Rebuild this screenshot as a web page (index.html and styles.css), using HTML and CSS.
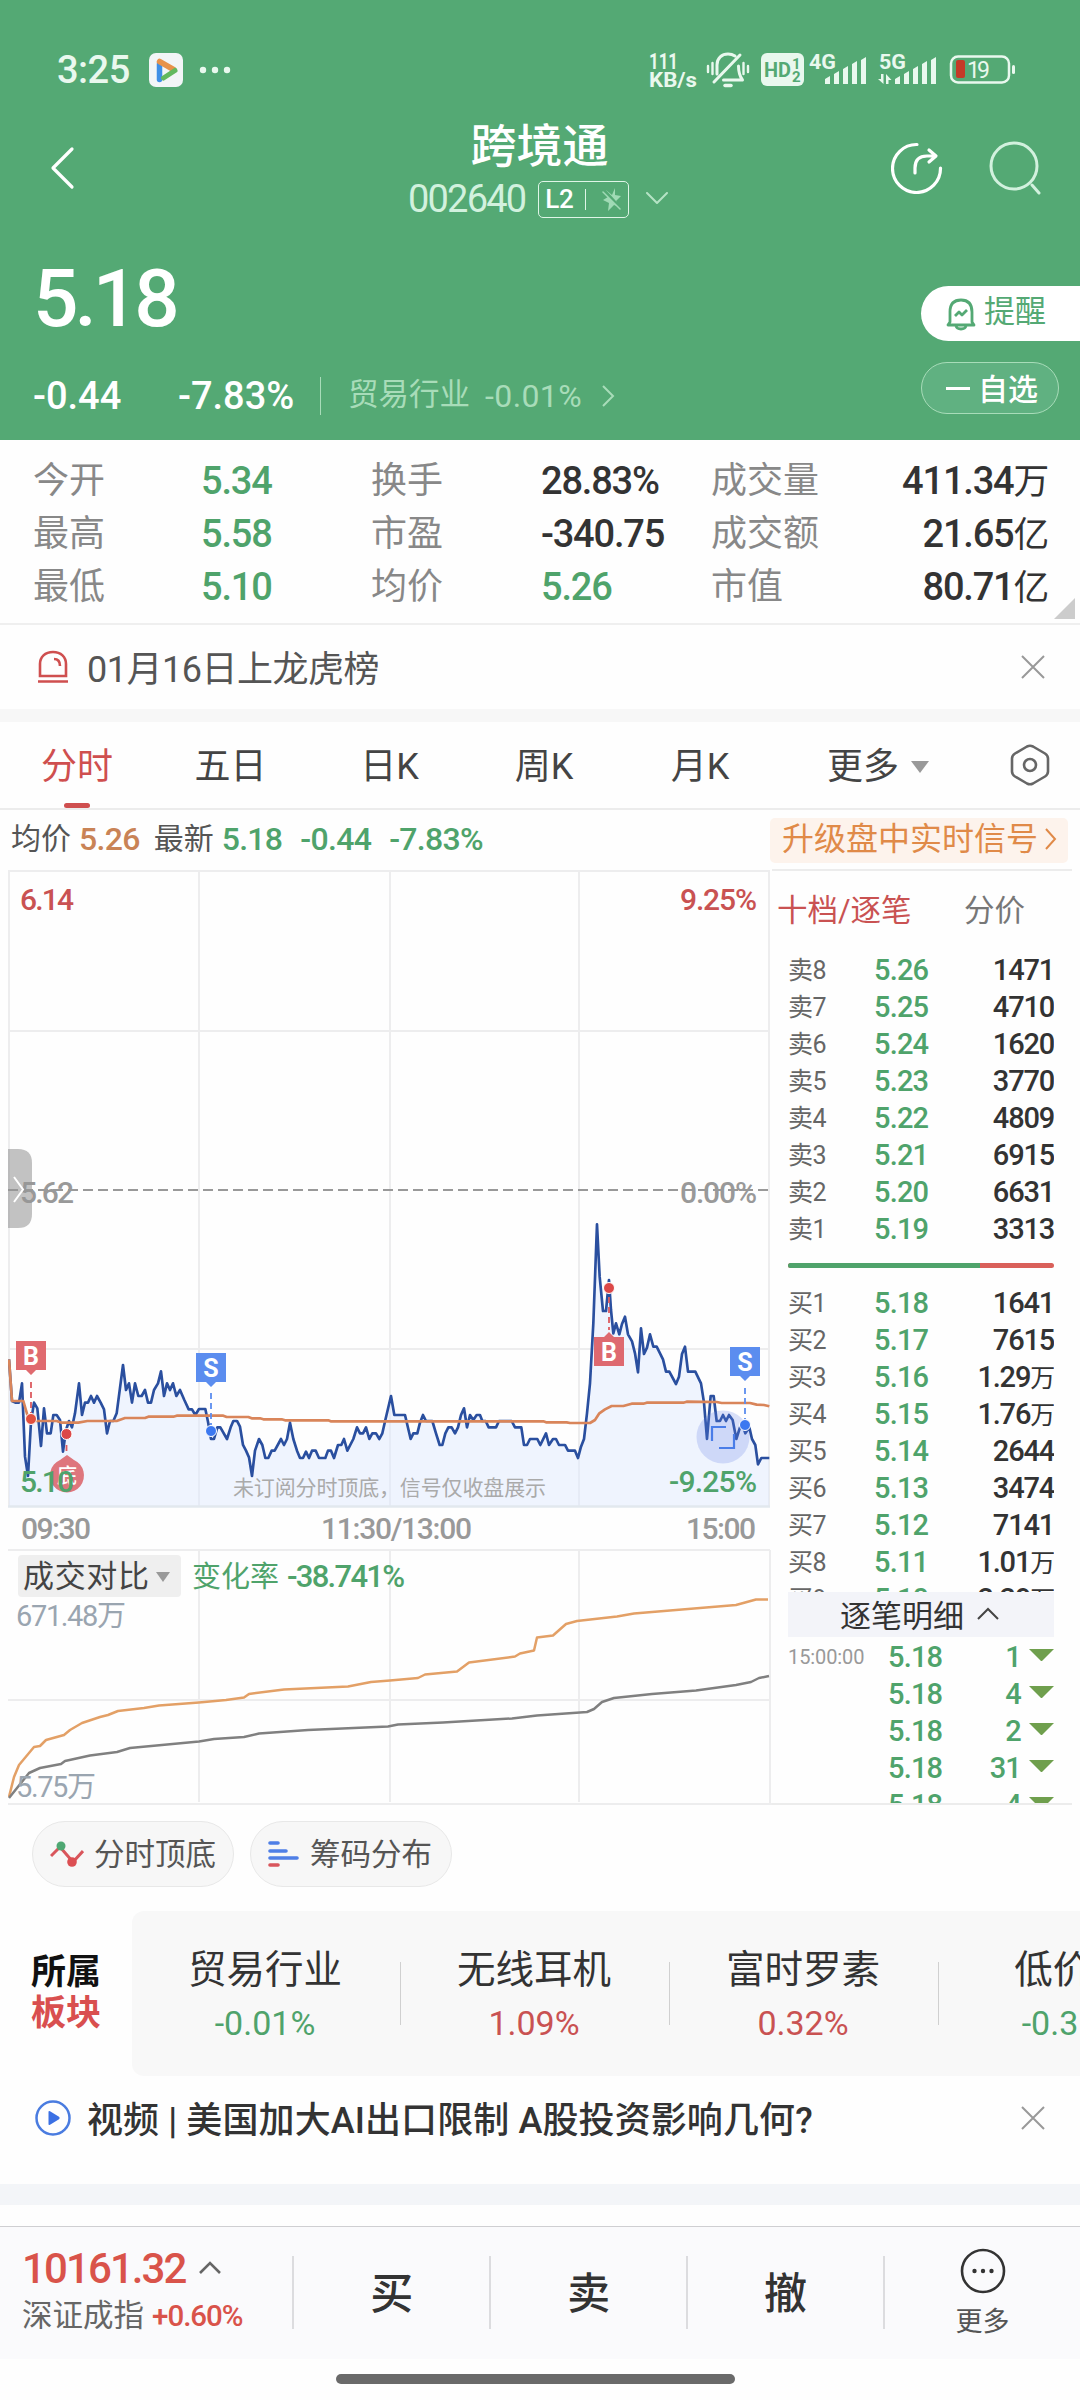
FILE: index.html
```html
<!DOCTYPE html>
<html lang="zh-CN">
	<head>
		<meta charset="utf-8">
		<title>跨境通 002640</title>
		<link rel="stylesheet" href="styles.css">
	</head>
	<body>

		<header class="header">
			<div class="status-bar">
				<span class="status-time">3:25</span>
				<svg class="app-icon" width="34" height="34" viewBox="0 0 34 34">
					<rect width="34" height="34" rx="7" fill="#f2f5f7"/>
					<path d="M10.500 11v15.500" stroke="#3f8fe6" stroke-width="5.500" stroke-linecap="round"/>
					<path d="M10.500 8.500l14 8" stroke="#e8924a" stroke-width="5.500" stroke-linecap="round"/>
					<path d="M14.500 25l11.500-7.500" stroke="#62b95f" stroke-width="5" stroke-linecap="round"/>
				</svg>
				<svg class="status-dots" width="32" height="8" viewBox="0 0 32 8">
					<circle cx="4" cy="4" r="3.200"/><circle cx="16" cy="4" r="3.200"/><circle cx="28" cy="4" r="3.200"/>
				</svg>
				<svg class="status-icons" width="376" height="40" viewBox="645 50 376 40">
					<text x="649" y="69" font-size="22" textLength="29" lengthAdjust="spacingAndGlyphs">111</text>
					<text x="649" y="87" font-size="21" textLength="48" lengthAdjust="spacingAndGlyphs">KB/s</text>
					<g fill="none" stroke="#e9f8ee" stroke-linecap="round" stroke-linejoin="round">
						<path d="M717 74v-9c0-7 5-11 11-11 3 0 5 .7 7 2M738.500 66c0 6 1 10 4 14h-19M714 82l26-27" stroke-width="3"/>
						<path d="M725 85.500h6" stroke-width="3.500"/>
						<path d="M708 66v6M712.500 63v11M743.500 63v11M748 66v6" stroke-width="2.400"/>
					</g>
					<rect x="761" y="53" width="43" height="33" rx="6"/>
					<text class="status-cut" x="764" y="77" font-size="21" textLength="27" lengthAdjust="spacingAndGlyphs">HD</text>
					<text class="status-cut" x="792" y="69" font-size="15">1</text>
					<text class="status-cut" x="792" y="82" font-size="15">2</text>
					<text x="809" y="69" font-size="21" textLength="27" lengthAdjust="spacingAndGlyphs">4G</text>
					<path d="M825 79l5-3v8h-5zM834 74l5-3v13h-5zM843 69l5-3v18h-5zM852 64l5-3v23h-5zM861 60l5-3v27h-5z"/>
					<text x="879" y="69" font-size="21" textLength="27" lengthAdjust="spacingAndGlyphs">5G</text>
					<path d="M881 74h2.500v10l-5.500-5h3zM886 84h2.500v-4h3l-5.500-6z"/>
					<path d="M895 79l5-3v8h-5zM904 74l5-3v13h-5zM913 69l5-3v18h-5zM922 64l5-3v23h-5zM931 60l5-3v27h-5z"/>
					<rect x="951" y="56.500" width="58" height="26" rx="7" fill="none" stroke="#e9f8ee" stroke-width="2.500"/>
					<rect x="956" y="60" width="9" height="18" rx="2" style="fill: #c43a27"/>
					<rect x="1012" y="65" width="3" height="9" rx="1.500"/>
					<text x="967" y="78" font-size="23" font-weight="400" textLength="23">19</text>
				</svg>
			</div>

			<div class="nav">
				<svg class="nav-back" width="26" height="44" viewBox="0 0 26 44"><path d="M23 3L4 22l19 19"/></svg>
				<div class="nav-title">
					<h1>跨境通</h1>
					<div class="nav-code">
						<span>002640</span>
						<span class="level">
							<b>L2</b>
							<i></i>
							<svg width="20" height="24" viewBox="0 0 20 24">
								<path d="M4 3l6 5 3-7v7l6 1-5 5 3 6-5-2-6 6 1-8-6-3 5-3z" fill="#a0dab5"/>
								<path class="flash-cut" d="M2 3l17 19"/>
								<path class="flash-slash" d="M1 5l17 17"/>
							</svg>
						</span>
						<svg width="22" height="14" viewBox="0 0 22 14"><path d="M1 1l10 10L21 1"/></svg>
					</div>
				</div>
				<svg class="nav-share" width="52" height="52" viewBox="0 0 52 52">
					<path d="M26 2.500A24 24 0 1 0 49.500 26"/>
					<path d="M24 31v-5c0-8 4-12 12-12h8M38 8l7 6-7 6"/>
				</svg>
				<svg class="nav-search" width="54" height="54" viewBox="0 0 54 54">
					<circle cx="26" cy="25" r="23"/>
					<path d="M44 44l7 8"/>
				</svg>
			</div>

			<div class="summary">
				<div class="summary-left">
					<div class="last-price">5.18</div>
					<div class="change">
						<span class="change-value">-0.44</span>
						<span class="change-percent">-7.83%</span>
						<span class="industry">贸易行业</span>
						<span class="industry-percent">-0.01%</span>
						<svg width="14" height="22" viewBox="0 0 14 22"><path d="M2 1l10 10L2 21" fill="none" stroke="#a8dcb9" stroke-width="2"/></svg>
					</div>
				</div>
				<div class="summary-right">
					<div class="btn-remind">
						<svg width="32" height="34" viewBox="0 0 32 34" fill="none" stroke="#54a974" stroke-width="2.800" stroke-linejoin="round">
							<path d="M5 25V15C5 7 9 3 16 3s11 4 11 12v10l2 3H3z"/>
							<path d="M11 29c1 4 9 4 10 0"/>
							<path d="M10 19l4-4 3 3 5-5"/>
						</svg>
						<span>提醒</span>
					</div>
					<div class="btn-favorite"><i></i><span>自选</span></div>
				</div>
			</div>
		</header>

		<section class="quotes">
			<span class="name">今开</span><span class="down">5.34</span>
			<span class="name">换手</span><span>28.83%</span>
			<span class="name">成交量</span><span class="right">411.34<small>万</small></span>
			<span class="name">最高</span><span class="down">5.58</span>
			<span class="name">市盈</span><span>-340.75</span>
			<span class="name">成交额</span><span class="right">21.65<small>亿</small></span>
			<span class="name">最低</span><span class="down">5.10</span>
			<span class="name">均价</span><span class="down">5.26</span>
			<span class="name">市值</span><span class="right">80.71<small>亿</small></span>
			<i class="corner"></i>
		</section>

		<section class="notice">
			<svg width="32" height="34" viewBox="0 0 32 34" fill="none" stroke="#cf4f4f" stroke-width="2.600">
				<path d="M3 26V14C3 7 8 2 16 2s13 5 13 12v12zM1 31.500h30"/>
				<path d="M17 9c4 0 6 3 6 7"/>
			</svg>
			<span>01月16日上龙虎榜</span>
			<svg class="close" width="24" height="24" viewBox="0 0 24 24"><path d="M1 1l22 22M23 1L1 23"/></svg>
		</section>

		<nav class="tabs">
			<span class="active">分时</span>
			<span>五日</span>
			<span>日K</span>
			<span>周K</span>
			<span>月K</span>
			<span>更多<i class="caret"></i></span>
			<svg width="40" height="42" viewBox="0 0 40 42" fill="none" stroke="#666" stroke-width="2.600" stroke-linejoin="round">
				<path d="M17 2.500q3-1.500 6 0l12 7q3 2 3 5v13q0 3-3 5l-12 7q-3 1.500-6 0l-12-7q-3-2-3-5v-13q0-3 3-5z"/>
				<circle cx="20" cy="21" r="6"/>
			</svg>
		</nav>

		<div class="chart-info">
			<span class="key">均价</span><span class="avg">5.26</span>
			<span class="key">最新</span><span class="down">5.18</span>
			<span class="down gap">-0.44</span>
			<span class="down gap">-7.83%</span>
			<div class="upgrade">
				升级盘中实时信号
				<svg width="12" height="22" viewBox="0 0 12 22"><path d="M1 1l9 10-9 10" fill="none" stroke="#e08a48" stroke-width="2"/></svg>
			</div>
		</div>

		<main class="market">
			<svg class="chart" width="764" height="936" viewBox="8 869 764 936">
				<!-- grid -->
				<g stroke="#ededee" stroke-width="2" fill="none">
					<path d="M8 871H770M8 1031H770M8 1349H770M9 870V1507M199 870V1507M390 870V1507M579 870V1507M769 870V1507"/>
					<path d="M8 1550H770M8 1700H770M199 1550V1802M390 1550V1802M579 1550V1802M770 1550V1804"/>
					<path d="M8 1804H772"/>
				</g>
				<path d="M8 1190H768" stroke="#999" stroke-width="2" stroke-dasharray="10 5"/>

				<!-- price -->
				<g transform="translate(0 1200) scale(.33333)" fill="none" stroke-linejoin="round">
					<path fill="#dfe9fd" fill-opacity=".5" d="M27 918V478L36 603 46 608 57 608 66 550 75 770 84 828 93 665 102 608 112 625 123 738 132 625 141 700 152 700 160 645 170 645 180 660 189 755 198 690 207 663 216 682 225 640 237 550 246 645 255 608 264 608 273 588 282 608 291 588 302 608 312 628 321 700 330 663 340 663 350 640 369 495 378 570 387 550 396 608 405 550 415 588 425 588 435 570 444 608 453 608 462 570 474 550 483 514 492 588 501 550 510 570 519 550 529 588 540 570 553 600 566 628 576 628 586 645 597 627 616 627 624 665 633 717 642 717 652 682 661 682 681 717 692 682 700 663 711 663 720 680 729 735 738 752 747 772 756 828 765 752 777 717 787 735 796 774 805 774 815 752 824 752 843 717 852 735 861 717 870 668 880 717 891 752 900 774 909 774 918 755 927 774 936 752 947 752 957 774 976 774 984 752 993 752 1002 774 1014 735 1024 735 1032 717 1042 752 1060 717 1071 682 1080 700 1089 700 1098 682 1108 717 1117 700 1128 700 1138 717 1147 700 1156 660 1173 588 1183 645 1215 645 1232 717 1240 700 1252 700 1260 668 1269 645 1278 663 1297 663 1308 700 1319 735 1327 735 1336 700 1345 682 1355 682 1365 700 1374 682 1383 645 1392 625 1401 682 1410 645 1420 660 1430 645 1440 645 1447 663 1457 663 1466 682 1488 682 1497 663 1535 663 1545 682 1564 682 1572 735 1581 735 1590 717 1612 717 1621 735 1638 700 1647 735 1659 717 1668 717 1677 735 1695 735 1704 752 1725 752 1734 774 1743 740 1752 717 1761 640 1770 550 1780 370 1791 73 1799 230 1809 333 1818 333 1827 240 1833 330 1840 400 1848 370 1858 403 1866 372 1875 350 1884 403 1896 424 1905 460 1914 517 1923 385 1932 462 1941 443 1950 403 1960 440 1970 440 1989 478 1998 515 2008 515 2028 552 2037 530 2046 462 2055 440 2064 515 2086 515 2103 550 2112 608 2121 717 2132 588 2141 588 2150 663 2160 663 2169 645 2178 663 2187 645 2198 660 2209 717 2220 682 2230 682 2236 700 2248 682 2256 717 2266 735 2274 793 2284 774 2308 774V918z"/>
					<path stroke="#2a4f9f" stroke-width="8" d="M27 478L36 603 46 608 57 608 66 550 75 770 84 828 93 665 102 608 112 625 123 738 132 625 141 700 152 700 160 645 170 645 180 660 189 755 198 690 207 663 216 682 225 640 237 550 246 645 255 608 264 608 273 588 282 608 291 588 302 608 312 628 321 700 330 663 340 663 350 640 369 495 378 570 387 550 396 608 405 550 415 588 425 588 435 570 444 608 453 608 462 570 474 550 483 514 492 588 501 550 510 570 519 550 529 588 540 570 553 600 566 628 576 628 586 645 597 627 616 627 624 665 633 717 642 717 652 682 661 682 681 717 692 682 700 663 711 663 720 680 729 735 738 752 747 772 756 828 765 752 777 717 787 735 796 774 805 774 815 752 824 752 843 717 852 735 861 717 870 668 880 717 891 752 900 774 909 774 918 755 927 774 936 752 947 752 957 774 976 774 984 752 993 752 1002 774 1014 735 1024 735 1032 717 1042 752 1060 717 1071 682 1080 700 1089 700 1098 682 1108 717 1117 700 1128 700 1138 717 1147 700 1156 660 1173 588 1183 645 1215 645 1232 717 1240 700 1252 700 1260 668 1269 645 1278 663 1297 663 1308 700 1319 735 1327 735 1336 700 1345 682 1355 682 1365 700 1374 682 1383 645 1392 625 1401 682 1410 645 1420 660 1430 645 1440 645 1447 663 1457 663 1466 682 1488 682 1497 663 1535 663 1545 682 1564 682 1572 735 1581 735 1590 717 1612 717 1621 735 1638 700 1647 735 1659 717 1668 717 1677 735 1695 735 1704 752 1725 752 1734 774 1743 740 1752 717 1761 640 1770 550 1780 370 1791 73 1799 230 1809 333 1818 333 1827 240 1833 330 1840 400 1848 370 1858 403 1866 372 1875 350 1884 403 1896 424 1905 460 1914 517 1923 385 1932 462 1941 443 1950 403 1960 440 1970 440 1989 478 1998 515 2008 515 2028 552 2037 530 2046 462 2055 440 2064 515 2086 515 2103 550 2112 608 2121 717 2132 588 2141 588 2150 663 2160 663 2169 645 2178 663 2187 645 2198 660 2209 717 2220 682 2230 682 2236 700 2248 682 2256 717 2266 735 2274 793 2284 774 2308 774"/>
					<path stroke="#d9855a" stroke-width="8" d="M27 478L36 603H70L85 655 105 663H170L185 668H235L262 663H350L375 654H435L445 650H520L530 647H670L680 651H745L755 655H780L790 658H845L855 661H985L992 664H1630L1638 667H1700L1710 669H1770L1785 660 1798 640 1815 628 1835 618H1870L1895 611H1930L1940 608H2050L2060 605 2150 606 2165 609H2250L2270 614 2292 615 2308 619"/>
				</g>
				<path d="M8 1506.500H770" stroke="#e2e8ee" stroke-width="2.500"/>

				<!-- signals -->
				<g stroke-width="1.800" stroke-dasharray="6 4">
					<path d="M31 1382V1414M66.500 1445V1455M609 1297V1330" stroke="#dc5a5f"/>
					<path d="M211 1393V1425M745 1388V1420" stroke="#5b8def"/>
				</g>
				<circle cx="723" cy="1437" r="26.500" fill="#6482e6" fill-opacity=".24"/>
				<path d="M712 1441v-14h14M719 1448h15v-14" fill="none" stroke="#4a7de8" stroke-width="2.200"/>
				<g stroke="#fff" stroke-width="1">
					<circle cx="31" cy="1419" r="5.500" fill="#e2503f"/>
					<circle cx="66.500" cy="1434" r="5.500" fill="#dc4848"/>
					<circle cx="609" cy="1288" r="5.500" fill="#dc4848"/>
					<circle cx="211" cy="1431" r="5.500" fill="#3b78f0"/>
					<circle cx="745" cy="1425" r="5.500" fill="#3b78f0"/>
				</g>
				<path d="M16 1341h30v29h-10l-5 5-5-5H16z" fill="#e06a6f"/>
				<path d="M594 1366h30v-29h-10l-5-5-5 5h-10z" fill="#dc5a60" fill-opacity=".9"/>
				<path d="M196 1353h30v29h-10l-5 5-5-5h-10zM730 1347h30v29h-10l-5 5-5-5h-10z" fill="#5b8def"/>
				<path d="M67 1455l7 5a17 17 0 1 1-14 0z" fill="#d9565c" fill-opacity=".8"/>
				<g class="mark-text">
					<text x="31" y="1365">B</text>
					<text x="609" y="1361">B</text>
					<text x="211" y="1377">S</text>
					<text x="745" y="1371">S</text>
					<text class="mark-bottom" x="67" y="1483">底</text>
				</g>

				<!-- turnover comparison -->
				<g fill="none" stroke-width="2.500" stroke-linejoin="round">
					<path stroke="#e3a066" d="M9 1797L14 1777 19 1765 34 1747 40 1746 46 1740 64 1735 70 1730 82 1723 100 1717 108 1715 118 1711 144 1708 159 1705.500 199 1702.500 226 1700 244 1697.500 249 1694 284 1689.500 348 1686.500 371 1682 390 1680.500 418 1678 425 1674.500 457 1671.500 469 1662.500 515 1656.500 520 1653.500 534 1650.500 537 1637.500 553 1635.500 566 1624 577 1621 617 1616.500 634 1613.500 736 1605 756 1599.500H768"/>
					<path stroke="#808080" d="M9 1798L29 1773 40 1768 61 1764 65 1761 90 1755.500 117 1752 130 1748 199 1741.500 214 1739 244 1737 259 1733.500 308 1730 388 1726.500 398 1724.500 443 1722.500 512 1718.500 537 1715.500 587 1712 594 1709 602 1702 614 1698 652 1694 696 1690.500 736 1685 751 1682 759 1678 769 1676"/>
				</g>

				<!-- labels -->
				<g font-size="30" font-weight="500">
					<text class="axis up" x="20" y="910" textLength="54">6.14</text>
					<text class="axis up" x="680" y="910" textLength="77">9.25%</text>
					<text class="axis" x="20" y="1203" textLength="54">5.62</text>
					<text class="axis" x="680" y="1203" textLength="77">0.00%</text>
					<text class="axis down" x="20" y="1492" textLength="54">5.10</text>
					<text class="axis down" x="669" y="1492" textLength="88">-9.25%</text>
					<text class="axis" x="21" y="1539" textLength="70">09:30</text>
					<text class="axis" x="321" y="1539" textLength="151">11:30/13:00</text>
					<text class="axis" x="686" y="1539" textLength="70">15:00</text>
				</g>
				<text class="hint" x="233" y="1495" textLength="313">未订阅分时顶底，信号仅收盘展示</text>
				<rect x="18" y="1555" width="163" height="42" rx="4" fill="#efefef"/>
				<text x="23" y="1587" font-size="31" fill="#444" textLength="126">成交对比</text>
				<path d="M156 1572h14l-7 10z" fill="#999"/>
				<text class="down" x="192" y="1587" font-size="29">变化率</text>
				<text class="down" x="287" y="1587" font-size="31" font-weight="500" textLength="118">-38.741%</text>
				<text x="16" y="1626" font-size="29" fill="#9aa5b0" textLength="110">671.48万</text>
				<text x="16" y="1797" font-size="29" fill="#9aa5b0" textLength="80">5.75万</text>

				<!-- side handle -->
				<path d="M8 1149h10q14 0 14 14v51q0 14-14 14H8z" fill="#969696" fill-opacity=".58"/>
				<path d="M14 1177l9 12.500-9 12.500" fill="none" stroke="#fff" stroke-width="2"/>
			</svg>

			<aside class="book">
				<div class="book-tabs"><span class="up">十档/逐笔</span><span>分价</span></div>
				<div class="levels">
					<div class="level-row"><span>卖8</span><b>5.26</b><em>1471</em></div>
					<div class="level-row"><span>卖7</span><b>5.25</b><em>4710</em></div>
					<div class="level-row"><span>卖6</span><b>5.24</b><em>1620</em></div>
					<div class="level-row"><span>卖5</span><b>5.23</b><em>3770</em></div>
					<div class="level-row"><span>卖4</span><b>5.22</b><em>4809</em></div>
					<div class="level-row"><span>卖3</span><b>5.21</b><em>6915</em></div>
					<div class="level-row"><span>卖2</span><b>5.20</b><em>6631</em></div>
					<div class="level-row"><span>卖1</span><b>5.19</b><em>3313</em></div>
					<div class="ratio"><i style="width: 72%"></i></div>
					<div class="level-row"><span>买1</span><b>5.18</b><em>1641</em></div>
					<div class="level-row"><span>买2</span><b>5.17</b><em>7615</em></div>
					<div class="level-row"><span>买3</span><b>5.16</b><em>1.29<small>万</small></em></div>
					<div class="level-row"><span>买4</span><b>5.15</b><em>1.76<small>万</small></em></div>
					<div class="level-row"><span>买5</span><b>5.14</b><em>2644</em></div>
					<div class="level-row"><span>买6</span><b>5.13</b><em>3474</em></div>
					<div class="level-row"><span>买7</span><b>5.12</b><em>7141</em></div>
					<div class="level-row"><span>买8</span><b>5.11</b><em>1.01<small>万</small></em></div>
					<div class="level-row"><span>买9</span><b>5.10</b><em>2.29<small>万</small></em></div>
				</div>
				<div class="detail-title">
					逐笔明细
					<svg width="22" height="13" viewBox="0 0 22 13"><path d="M1 12L11 2l10 10" fill="none" stroke="#444" stroke-width="2"/></svg>
				</div>
				<div class="ticks">
					<div class="tick"><span>15:00:00</span><b>5.18</b><em>1</em><i></i></div>
					<div class="tick"><span></span><b>5.18</b><em>4</em><i></i></div>
					<div class="tick"><span></span><b>5.18</b><em>2</em><i></i></div>
					<div class="tick"><span></span><b>5.18</b><em>31</em><i></i></div>
					<div class="tick"><span></span><b>5.18</b><em>4</em><i></i></div>
				</div>
			</aside>
		</main>

		<div class="pills">
			<div class="pill">
				<svg width="34" height="28" viewBox="0 0 34 28">
					<path d="M1 16l9-9 13 15 10-11" fill="none" stroke="#d9565c" stroke-width="3"/>
					<circle cx="11" cy="6" r="4.500" fill="#4fa873"/>
					<circle cx="22" cy="22" r="4.800" fill="#dc4f53"/>
				</svg>
				<span>分时顶底</span>
			</div>
			<div class="pill">
				<svg width="32" height="28" viewBox="0 0 32 28" stroke-width="3.600" stroke-linecap="round">
					<path d="M2 3h8M2 11h16M2 18h27" stroke="#4f7fe6"/>
					<path d="M2 25h8" stroke="#d9565c"/>
				</svg>
				<span>筹码分布</span>
			</div>
		</div>

		<section class="sectors">
			<div class="sectors-title">所属<br><span>板块</span></div>
			<div class="sectors-list">
				<div class="sector">贸易行业<span class="down">-0.01%</span></div>
				<div class="sector">无线耳机<span class="up">1.09%</span></div>
				<div class="sector">富时罗素<span class="up">0.32%</span></div>
				<div class="sector">低价股<span class="down">-0.35%</span></div>
			</div>
		</section>

		<section class="video">
			<svg width="36" height="36" viewBox="0 0 36 36">
				<circle cx="18" cy="18" r="16.500" fill="none" stroke="#4a7ce0" stroke-width="2.500"/>
				<path d="M13.500 12q0-1.500 1.500-.7l9 5.500q1.500 1.200 0 2.400l-9 5.500q-1.500.8-1.500-.7z" fill="#3b70e4"/>
			</svg>
			<span>视频 | 美国加大AI出口限制 A股投资影响几何?</span>
			<svg class="close" width="24" height="24" viewBox="0 0 24 24"><path d="M1 1l22 22M23 1L1 23"/></svg>
		</section>
		<div class="band"></div>

		<footer class="bottom-bar">
			<div class="index">
				<div class="index-value">10161.32<svg width="24" height="14" viewBox="0 0 24 14"><path d="M2 12L12 2l10 10" fill="none" stroke="#666" stroke-width="2.600"/></svg></div>
				<div class="index-name">深证成指<span>+0.60%</span></div>
			</div>
			<div class="action">买</div>
			<div class="action">卖</div>
			<div class="action">撤</div>
			<div class="more">
				<svg width="46" height="46" viewBox="0 0 46 46">
					<circle cx="23" cy="23" r="21" fill="none" stroke="#333" stroke-width="2.600"/>
					<g fill="#333"><circle cx="14.500" cy="23" r="2.200"/><circle cx="23" cy="23" r="2.200"/><circle cx="31.500" cy="23" r="2.200"/></g>
				</svg>
				<span>更多</span>
			</div>
		</footer>
		<div class="home-indicator"></div>

	</body>
</html>
```

FILE: styles.css
```css
* {
	box-sizing: border-box;
}

body {
	margin: 0;
	width: 1080px;
	height: 2400px;
	overflow: hidden;
	background: #fefefe;
	color: #333;
	font-family: Roboto, "Noto Sans CJK SC", sans-serif;
}

svg {
	display: block;
	flex: none;
}

b, em, i {
	font-style: normal;
	font-weight: 400;
}

small {
	font-size: .94em;
	font-weight: 400;
}

.up {
	color: #c95252;
	fill: #c95252;
}

.down {
	color: #4fa36b;
	fill: #4fa36b;
}

/* header */

.header {
	height: 440px;
	background: #54a974;
	color: #fff;
}

.status-bar {
	display: flex;
	align-items: center;
	height: 90px;
	padding: 50px 59px 0 57px;
}

.status-time {
	width: 92px;
	font-size: 38px;
	font-weight: 500;
	line-height: 40px;
	letter-spacing: -0.5px;
	color: #e9f8ee;
}

.status-dots {
	margin-left: 16px;
	fill: #e9f8ee;
}

.status-icons {
	margin-left: auto;
	fill: #e9f8ee;
	font-weight: 700;
}

.status-icons .status-cut {
	fill: #54a974;
}

.nav {
	display: flex;
	height: 146px;
	padding: 26px 38px 0 49px;
}

.nav svg {
	fill: none;
	stroke: #fff;
	stroke-width: 3.2;
	stroke-linecap: round;
	stroke-linejoin: round;
}

.nav-back {
	margin-top: 30px;
}

.nav-title {
	flex: 1;
	margin-left: 76px;
}

.nav-title h1 {
	margin: 0;
	padding: 2px 0 0 15px;
	font-size: 46px;
	font-weight: 500;
	line-height: 56px;
	text-align: center;
	width: 762px;
}

.nav-code {
	display: flex;
	align-items: center;
	height: 38px;
	margin-top: 6px;
	padding-left: 257px;
	font-size: 38px;
	letter-spacing: -1.8px;
	color: #d2f1de;
}

.level {
	display: flex;
	align-items: center;
	width: 91px;
	height: 37px;
	margin: 0 17px 0 13px;
	padding-left: 6px;
	border: 1px solid #dff5e7;
	border-radius: 5px;
	font-size: 26px;
	letter-spacing: -0.5px;
	color: #fff;
}

.level b {
	font-weight: 500;
}

.level i {
	width: 1px;
	height: 21px;
	margin: 0 16px 0 12px;
	background: #dff5e7;
}

.nav .level svg {
	stroke: none;
}

.flash-cut {
	stroke: #54a974;
	stroke-width: 3;
}

.flash-slash {
	stroke: #a0dab5;
	stroke-width: 1.5;
}

.nav .nav-code > svg {
	stroke: #b5e3c5;
	stroke-width: 2;
}

.nav-share {
	margin: 26px 0 0 -200px;
}

.nav-search {
	margin: 25px 0 0 45px;
}

.nav .nav-search {
	stroke: #d2f1de;
	stroke-width: 3;
}

.summary {
	display: flex;
	justify-content: space-between;
	height: 204px;
}

.summary-left {
	padding: 22px 0 0 33px;
}

.last-price {
	height: 80px;
	font-size: 80px;
	font-weight: 500;
	line-height: 82px;
	letter-spacing: -4px;
}

.change {
	display: flex;
	align-items: center;
	height: 40px;
	margin-top: 38px;
	font-size: 38px;
	font-weight: 500;
}

.change-value {
	width: 145px;
}

.change-percent {
	width: 142px;
}

.industry {
	height: 38px;
	padding-left: 27px;
	border-left: 1px solid #a8dcb9;
	font-size: 30.5px;
	font-weight: 400;
	line-height: 36px;
	color: #a8dcb9;
}

.industry-percent {
	width: 116px;
	margin-left: 15px;
	font-size: 32px;
	font-weight: 400;
	letter-spacing: 0.4px;
	color: #a8dcb9;
}

.summary-right {
	width: 159px;
	padding-top: 50px;
}

.btn-remind {
	display: flex;
	align-items: center;
	gap: 7px;
	height: 55px;
	padding-left: 24px;
	border-radius: 28px 0 0 28px;
	background: #fff;
	font-size: 31px;
	line-height: 50px;
	color: #54a974;
}

.btn-remind span, .btn-favorite span {
	margin-bottom: 3px;
}

.btn-favorite {
	display: flex;
	align-items: center;
	gap: 8px;
	width: 138px;
	height: 52px;
	margin-top: 21px;
	padding-left: 24px;
	border: 1px solid #a8dcb9;
	border-radius: 26px;
	background: #60b181;
	font-size: 30px;
	font-weight: 500;
}

.btn-favorite i {
	width: 24px;
	height: 3px;
	background: #fff;
}

/* quotes */

.quotes {
	display: grid;
	grid-template-columns: 168px 170px 170px 170px 120px 217px;
	grid-auto-rows: 53px;
	position: relative;
	height: 185px;
	padding: 15px 32px 0 33px;
	border-bottom: 2px solid #efefef;
	font-size: 38px;
	font-weight: 500;
	line-height: 53px;
	letter-spacing: -1.2px;
}

.quotes .name {
	font-size: 36px;
	font-weight: 400;
	letter-spacing: 0;
	color: #888;
}

.quotes .right {
	text-align: right;
}

.corner {
	position: absolute;
	right: 5px;
	bottom: 4px;
	border-left: 21px solid transparent;
	border-bottom: 21px solid #ccc;
}

.notice {
	display: flex;
	align-items: center;
	height: 97px;
	padding: 0 35px 0 37px;
	border-bottom: 13px solid #f7f7f7;
	font-size: 36px;
	letter-spacing: -0.5px;
	color: #555;
}

.notice span {
	margin: 0 0 3px 18px;
}

.close {
	margin-left: auto;
	stroke: #999;
	stroke-width: 2;
}

.tabs {
	display: grid;
	grid-template-columns: 154px 153px 165px 144px 168px 206px 1fr;
	align-items: center;
	height: 88px;
	border-bottom: 2px solid #ececec;
	font-size: 36px;
	line-height: 86px;
	text-align: center;
	color: #444;
}

.tabs span {
	height: 86px;
	padding-top: 2px;
}

.tabs span:nth-child(6) {
	padding-right: 18px;
}

.tabs svg {
	margin-left: 20px;
}

.tabs .active {
	position: relative;
	color: #cf4f4f;
}

.tabs .active::after {
	content: "";
	position: absolute;
	left: 64px;
	bottom: 0;
	width: 26px;
	height: 5px;
	border-radius: 3px;
	background: #cf4f4f;
}

.caret {
	display: inline-block;
	margin: 0 0 6px 12px;
	border: 9px solid transparent;
	border-top: 12px solid #999;
	border-bottom: 0;
}

.chart-info {
	display: flex;
	align-items: center;
	height: 59px;
	padding: 2px 12px 0 11px;
	font-size: 32px;
	font-weight: 500;
	line-height: 44px;
	letter-spacing: -0.7px;
}

.chart-info > span {
	margin-bottom: 3px;
}

.chart-info .key {
	margin-right: 8px;
	font-size: 30px;
	font-weight: 400;
	letter-spacing: 0;
	color: #555;
}

.chart-info .avg {
	margin-right: 14px;
	color: #c98356;
}

.chart-info .gap {
	margin-left: 18px;
}

.upgrade {
	display: flex;
	align-items: center;
	gap: 7px;
	width: 298px;
	height: 45px;
	margin-left: auto;
	padding: 0 0 3px 12px;
	border-radius: 5px;
	background: #fdf3ec;
	font-weight: 400;
	letter-spacing: 0;
	color: #e08a48;
}

/* chart and order book */

.market {
	display: flex;
	height: 936px;
	padding-left: 8px;
}

.axis {
	fill: #999;
}

.axis.up {
	fill: #c95252;
}

.axis.down {
	fill: #4fa36b;
}

.hint {
	font-size: 21px;
	fill: #aaa;
}

.mark-text {
	fill: #fff;
	font-size: 25px;
	font-weight: 700;
	text-anchor: middle;
}

.mark-bottom {
	font-size: 20px;
	font-weight: 500;
}

.book {
	width: 300px;
	border-top: 2px solid #ececec;
	border-bottom: 2px solid #ececec;
	padding: 0 18px 0 16px;
	letter-spacing: -0.8px;
}

.book-tabs {
	display: flex;
	justify-content: space-between;
	width: 248px;
	height: 81px;
	margin-left: -11px;
	font-size: 30.5px;
	line-height: 79px;
	letter-spacing: 0;
	color: #777;
}

.levels {
	height: 640px;
	overflow: hidden;
}

.level-row {
	display: grid;
	grid-template-columns: 86px 80px 1fr;
	height: 37px;
	font-size: 29px;
	font-weight: 500;
	line-height: 37px;
}

.level-row span {
	font-size: 25px;
	font-weight: 400;
	letter-spacing: -0.5px;
	color: #666;
}

.level-row b, .level-row em, .tick b, .tick em {
	font-weight: 500;
}

.level-row b, .tick {
	color: #4fa36b;
}

.level-row em {
	letter-spacing: -1.2px;
	text-align: right;
}

.level-row small {
	font-size: 25px;
}

.ratio {
	height: 5px;
	margin: 15px 0 17px;
	border-radius: 3px;
	background: #d9605a;
	overflow: hidden;
}

.ratio i {
	display: block;
	height: 5px;
	background: #4fa36b;
}

.detail-title {
	display: flex;
	align-items: center;
	justify-content: center;
	gap: 13px;
	height: 45px;
	padding: 0 3px 3px 0;
	background: #f3f4f9;
	font-size: 31px;
	letter-spacing: 0;
}

.ticks {
	height: 166px;
	padding-top: 1px;
	overflow: hidden;
}

.tick {
	display: grid;
	grid-template-columns: 100px 70px 63px 33px;
	align-items: center;
	height: 37px;
	font-size: 29px;
}

.tick span {
	font-size: 20px;
	letter-spacing: -0.1px;
	color: #999;
}

.tick em {
	text-align: right;
}

.tick i {
	margin: 0 0 3px 8px;
	border: 12px solid transparent;
	border-top: 12px solid #6f9f4d;
	border-bottom: 0;
}

/* pills and sectors */

.pills {
	display: flex;
	gap: 16px;
	padding: 16px 32px 0;
	height: 106px;
}

.pill {
	display: flex;
	align-items: center;
	gap: 10px;
	width: 202px;
	height: 66px;
	padding-left: 17px;
	border: 1px solid #e8e8e8;
	border-radius: 33px;
	background: #f7f7f7;
	font-size: 30.5px;
	color: #555;
}

.pill span {
	margin-bottom: 4px;
}

.sectors {
	display: flex;
	height: 165px;
}

.sectors-title {
	width: 132px;
	padding: 41px 0 0 31px;
	font-size: 35px;
	font-weight: 700;
	line-height: 41px;
	color: #111;
}

.sectors-title span {
	color: #d94f4f;
}

.sectors-list {
	display: flex;
	width: 948px;
	overflow: hidden;
	border-radius: 12px 0 0 12px;
	background: #f8f8f8;
}

.sector {
	flex: none;
	position: relative;
	width: 269px;
	padding: 35px 3px 0 0;
	font-size: 38.5px;
	line-height: 48px;
	text-align: center;
}

.sector span {
	display: block;
	font-size: 34px;
	line-height: 58px;
}

.sector::after {
	content: "";
	position: absolute;
	top: 51px;
	right: 0;
	width: 1px;
	height: 63px;
	background: #d0d0d0;
}

.video {
	display: flex;
	align-items: center;
	height: 108px;
	padding: 0 35px 24px 35px;
	font-size: 36px;
}

.video span {
	margin: 0 0 3px 16px;
	letter-spacing: 0.1px;
	font-weight: 500;
}

.band {
	height: 21px;
	background: #f3f5f8;
}

/* bottom bar */

.bottom-bar {
	display: flex;
	height: 133px;
	margin-top: 21px;
	border-top: 1px solid #cfcfd2;
	background: #fafafc;
}

.index {
	width: 293px;
	padding: 17px 0 0 22px;
}

.index-value {
	display: flex;
	align-items: center;
	gap: 12px;
	height: 48px;
	font-size: 42px;
	font-weight: 500;
	letter-spacing: -1.9px;
	color: #d9534a;
}

.index-name {
	font-size: 30.5px;
	line-height: 48px;
	color: #666;
}

.index-name span {
	margin-left: 8px;
	font-size: 29.5px;
	font-weight: 500;
	letter-spacing: -1px;
	color: #d9534a;
}

.action, .more {
	width: 197.5px;
	height: 73px;
	margin-top: 29px;
	border-left: 2px solid #dcdcdf;
	font-size: 43px;
	font-weight: 500;
	line-height: 76px;
	text-align: center;
}

.more {
	display: flex;
	flex-direction: column;
	align-items: center;
	font-size: 27px;
	font-weight: 400;
	line-height: 36px;
	color: #555;
}

.more svg {
	margin-top: -8px;
}

.more span {
	margin-top: 10px;
}

.home-indicator {
	width: 399px;
	height: 10px;
	margin: 15px 0 0 336px;
	border-radius: 5px;
	background: #6a6a6a;
}
```
